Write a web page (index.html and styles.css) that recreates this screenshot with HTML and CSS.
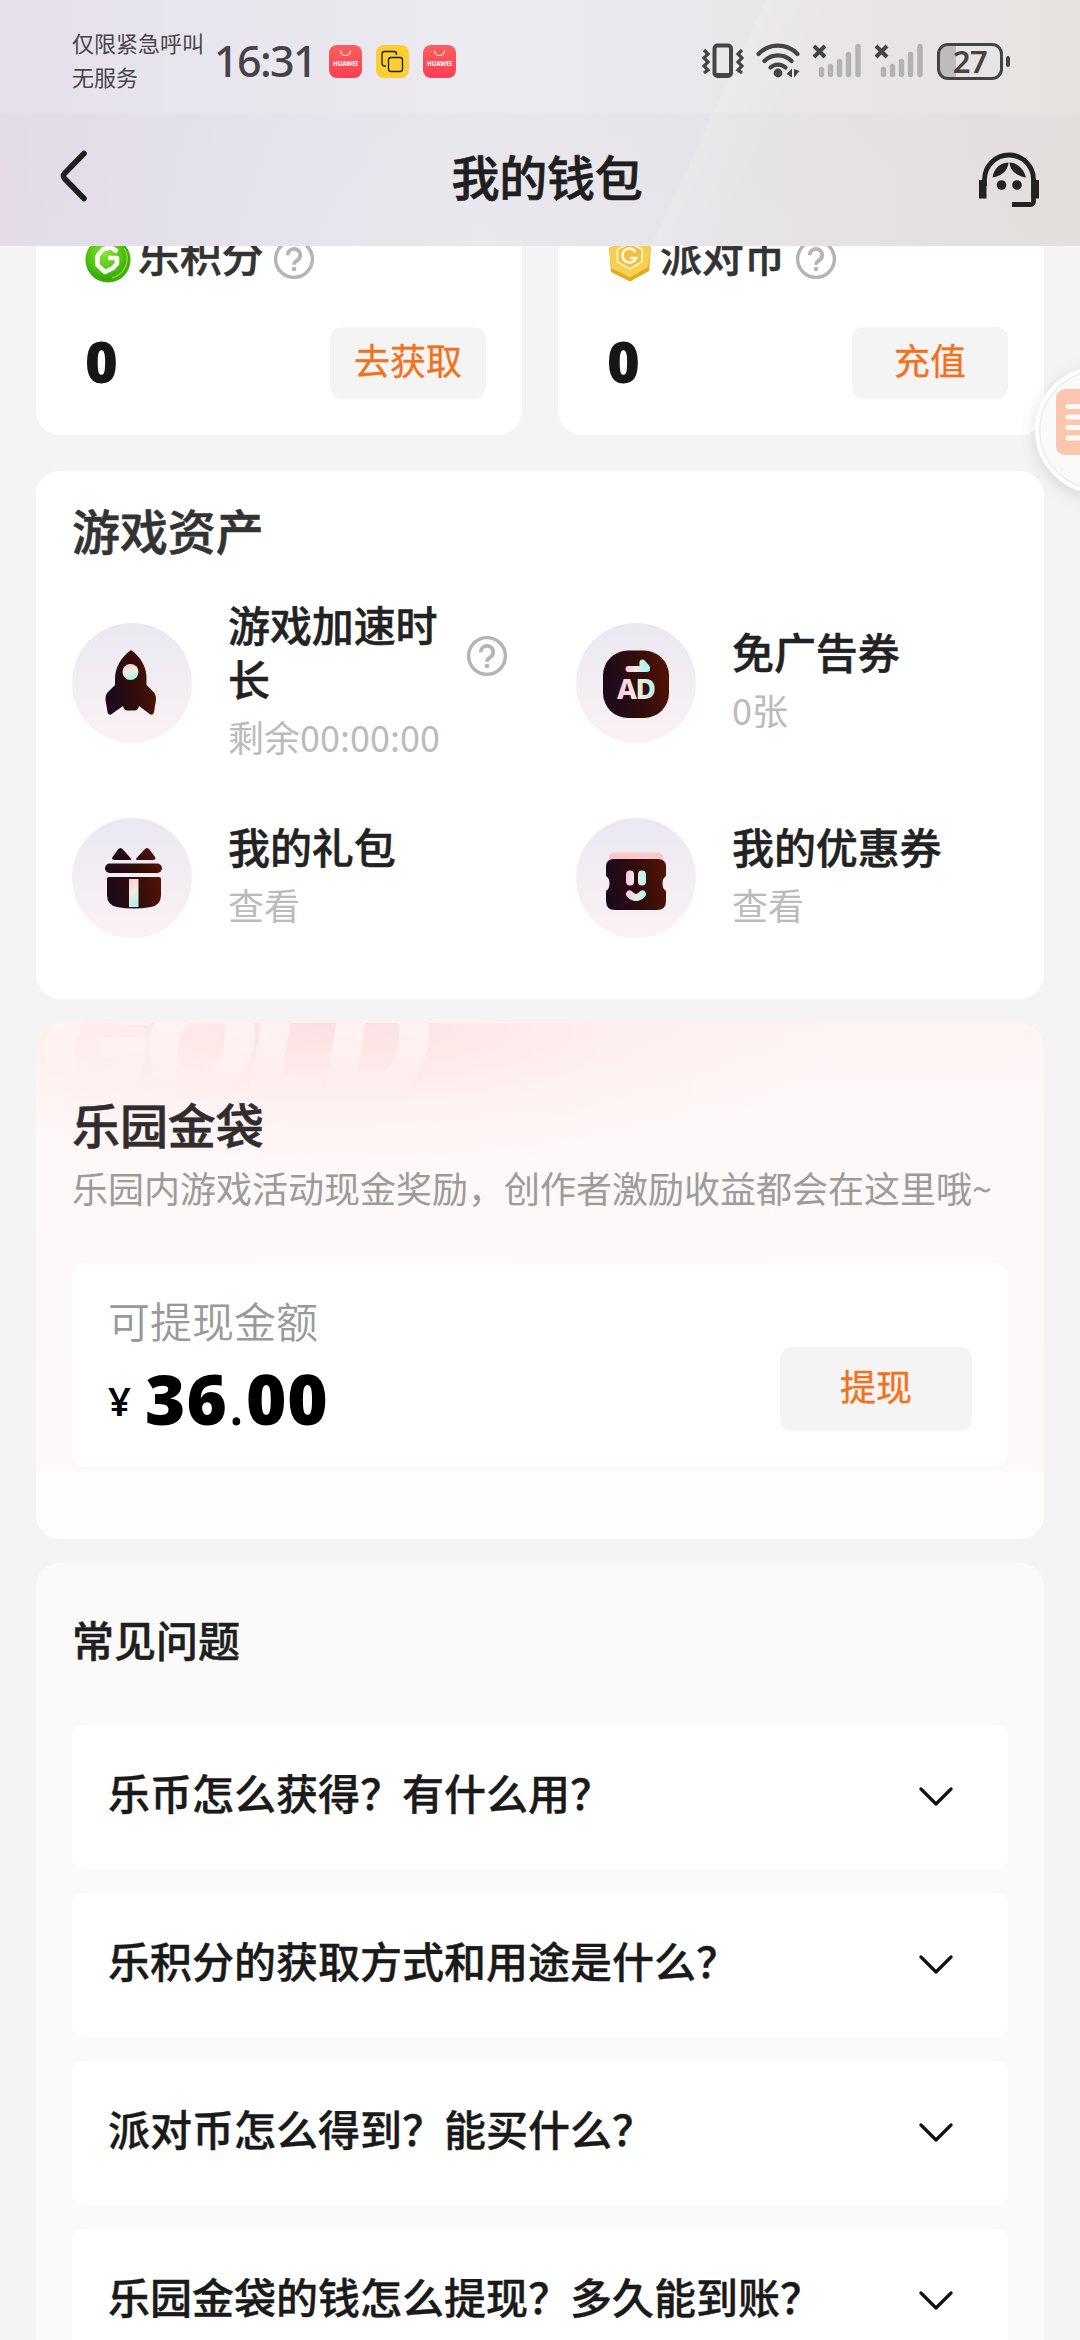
FILE: index.html
```html
<!DOCTYPE html>
<html lang="zh-CN">
<head>
<meta charset="utf-8">
<title>我的钱包</title>
<link rel="stylesheet" href="styles.css">
</head>
<body>
<svg class="defs" aria-hidden="true">
  <defs>
    <linearGradient id="dark" x1="0" y1="0.4" x2="1" y2="0.2"><stop offset="0" stop-color="#1c0a1c"/><stop offset="0.5" stop-color="#300c0c"/><stop offset="1" stop-color="#541405"/></linearGradient>
    <linearGradient id="holoV" x1="0" y1="0" x2="0.3" y2="1"><stop offset="0" stop-color="#fcc4e2"/><stop offset="0.5" stop-color="#f6ead8"/><stop offset="1" stop-color="#b4f2ee"/></linearGradient>
    <linearGradient id="holoH" x1="0" y1="0" x2="1" y2="0"><stop offset="0" stop-color="#fdc6e6"/><stop offset="0.5" stop-color="#f6ead8"/><stop offset="1" stop-color="#aef2f2"/></linearGradient>
    <linearGradient id="smile" gradientUnits="userSpaceOnUse" x1="50" y1="0" x2="70" y2="0"><stop offset="0" stop-color="#fdc6e6"/><stop offset="0.5" stop-color="#f0ecdf"/><stop offset="1" stop-color="#aef2f2"/></linearGradient>
    <radialGradient id="green" cx="0.45" cy="0.35" r="0.7"><stop offset="0" stop-color="#8be33a"/><stop offset="0.6" stop-color="#4fc40f"/><stop offset="1" stop-color="#2f9a08"/></radialGradient>
    <linearGradient id="red" x1="0" y1="0" x2="0" y2="1"><stop offset="0" stop-color="#fc5f5d"/><stop offset="1" stop-color="#fb3e54"/></linearGradient>
    <symbol id="help" viewBox="0 0 42 42"><circle cx="21" cy="21" r="18.400" fill="none" stroke="#b4b4b4" stroke-width="3.400"/><path d="M14.800 17.200a6.200 6.200 0 1 1 9.400 5.200c-2 1.200-3.200 2-3.200 4.400" fill="none" stroke="#b4b4b4" stroke-width="3.600"/><circle cx="21" cy="31" r="2.300" fill="#b4b4b4"/></symbol>
    <symbol id="down" viewBox="0 0 34 20"><path d="M2 2 17 17 32 2" fill="none" stroke="#111" stroke-width="3.200" stroke-linecap="round" stroke-linejoin="round"/></symbol>
    <symbol id="signal" viewBox="0 0 52 36"><path d="M2 3 13 14M13 3 2 14" stroke="#444" stroke-width="4" stroke-linecap="butt"/><g stroke="#b3b1b2" stroke-width="5.400" stroke-linecap="round"><path d="M9.500 26.500v5M18.500 23.500v8M27.500 18.500v13M36.500 11.500v20M46 3.500v28"/></g></symbol>
    <symbol id="huawei" viewBox="0 0 33 33"><rect width="33" height="33" rx="8" fill="url(#red)"/><path d="M11.500 5.500a5 5 0 0 0 10 0" fill="none" stroke="#ffd9d9" stroke-width="1.100"/><text x="16.500" y="21.300" text-anchor="middle" textLength="25" lengthAdjust="spacingAndGlyphs" class="huawei-word">HUAWEI</text></symbol>
  </defs>
</svg>

<div class="page">
  <header class="top">
    <div class="status">
      <div class="carrier">仅限紧急呼叫<br>无服务</div>
      <div class="clock">16:31</div>
      <div class="apps">
        <svg width="33" height="33"><use href="#huawei"/></svg>
        <svg width="33" height="33" viewBox="0 0 33 33"><rect width="33" height="33" rx="8" fill="#fbcf2f"/><path d="M20.500 10V9a2.500 2.500 0 0 0-2.500-2.500H8.500A2.500 2.500 0 0 0 6 9v9.500A2.500 2.500 0 0 0 8.500 21H10" fill="none" stroke="#1d1a10" stroke-width="1.300"/><rect x="12.500" y="12.500" width="14" height="14" rx="2.500" fill="none" stroke="#1d1a10" stroke-width="1.300"/></svg>
        <svg width="33" height="33"><use href="#huawei"/></svg>
      </div>
      <div class="indicators">
        <svg width="42" height="36" viewBox="0 0 42 36"><rect x="12.500" y="2.500" width="16.500" height="30.500" rx="3" fill="none" stroke="#444" stroke-width="4"/><path d="M13 31.500h16" stroke="#444" stroke-width="3"/><path d="M2 7l4 4-4 4 4 4-4 4 4 4-4 3M40 7l-4 4 4 4-4 4 4 4-4 4 4 3" fill="none" stroke="#444" stroke-width="3.200"/></svg>
        <svg width="44" height="36" viewBox="0 0 44 36"><g fill="none" stroke="#444" stroke-width="4.200" stroke-linecap="round"><path d="M2.500 11a27 27 0 0 1 39 0"/><path d="M8.500 18a19 19 0 0 1 27 0"/><path d="M14.500 24.500a11 11 0 0 1 15 0" /></g><circle cx="22" cy="30" r="4.400" fill="#444"/><path d="M30.500 31 36 25.500V34.500M38 26v8.500L43.500 28z" fill="#444"/></svg>
        <svg width="52" height="36"><use href="#signal"/></svg>
        <svg width="52" height="36"><use href="#signal"/></svg>
        <div class="battery"><span>27</span></div>
      </div>
    </div>
    <div class="nav">
      <svg class="back" width="30" height="52" viewBox="0 0 30 52"><path d="M26 3.500 6.500 23.500a3.600 3.600 0 0 0 0 5L26 48.500" fill="none" stroke="#1f1f21" stroke-width="5.600" stroke-linecap="round"/></svg>
      <h1>我的钱包</h1>
      <svg class="service" width="62" height="56" viewBox="0 0 62 56"><path d="M6.500 34v-6.500a24.500 24.500 0 0 1 49 0v22a3 3 0 0 1-3 3H34" fill="none" stroke="#222" stroke-width="4.800"/><path d="M1 28h7.500v18.500H1zM53.500 28H61v18.500h-7.500z" fill="#222"/><path d="M14.500 25.500C16 17 21 11 30.500 10.500 30 18 24.500 24 14.500 25.500zM31.500 10.500C40 11 46 17 48 25.500 38 24 32 18 31.500 10.500z" fill="#222"/><circle cx="23.500" cy="33" r="4.800" fill="#222"/><circle cx="39" cy="33" r="4.800" fill="#222"/></svg>
    </div>
  </header>

  <main class="scroll">
    <section class="coins">
      <div class="coin-card">
        <div class="coin-name">
          <svg width="48" height="48" viewBox="0 0 48 48"><circle cx="24" cy="24" r="22.500" fill="#3fae0b"/><circle cx="23" cy="23" r="21" fill="url(#green)"/><path d="M40 12a20 20 0 0 1-12 30" fill="none" stroke="#8fdc3c" stroke-width="1.400"/><path d="M33.500 15.500 27 11.500 19.500 13 13.500 20v9l7.500 7 8-4 4-4.500v-5.500h-9" fill="none" stroke="#fbfff2" stroke-width="4.600" stroke-linejoin="round"/></svg>
          <span>乐积分</span>
          <svg class="help" width="42" height="42"><use href="#help"/></svg>
        </div>
        <div class="coin-row"><b>0</b><div class="pill">去获取</div></div>
      </div>
      <div class="coin-card">
        <div class="coin-name">
          <svg width="48" height="48" viewBox="0 0 48 48"><path d="M24 2 45 11 43 35 24 45.500 5 36 3 12z" fill="#e2aa20"/><path d="M24 1 45 11 42 31 24 41.500 5 32 3 12z" fill="#f9cf51"/><path d="M24 7 36 13.500v12L24 33l-12.500-7V13.500z" fill="#f0bf46" stroke="#fff3c6" stroke-width="1.800"/><path d="M29.500 16a7 7 0 1 0 .5 6h-6" fill="none" stroke="#fff8da" stroke-width="2.600"/></svg>
          <span>派对币</span>
          <svg class="help" width="42" height="42"><use href="#help"/></svg>
        </div>
        <div class="coin-row"><b>0</b><div class="pill">充值</div></div>
      </div>
    </section>

    <section class="assets">
      <h2>游戏资产</h2>
      <div class="asset-grid">
        <div class="asset">
          <svg width="120" height="120" viewBox="0 0 120 120"><path d="M59 27C49 34 43 45 43 56v6l-8 8q-2 3-1.500 7l2 12c.6 3 3.500 3.500 5.300 1.300L51 83q1 4.500 4.500 4.500h7q3.500 0 4.500-4.500l9.700 7.300c2 2.200 4.700 1.700 5.300-1.300l2-12q.5-4-1.500-7l-8-8v-6C75 45 69 34 59 27z" fill="url(#dark)"/><circle cx="58.500" cy="49" r="8" fill="url(#holoV)"/></svg>
          <div class="asset-text"><strong>游戏加速时长</strong><small>剩余00:00:00</small></div>
          <svg class="help" width="42" height="42"><use href="#help"/></svg>
        </div>
        <div class="asset">
          <svg width="120" height="120" viewBox="0 0 120 120"><rect x="27" y="27.500" width="66" height="67.500" rx="25" fill="url(#dark)"/><path d="M52.500 46h18.500M66.500 39.500l4.500 5v1.500h-4.500z" fill="none" stroke="url(#smile)" stroke-width="6" stroke-linejoin="round" stroke-linecap="round"/><text x="60.500" y="76" text-anchor="middle" textLength="39" class="ad-word">AD</text></svg>
          <div class="asset-text"><strong>免广告券</strong><small>0张</small></div>
        </div>
        <div class="asset">
          <svg width="120" height="120" viewBox="0 0 120 120"><g fill="url(#dark)"><path d="M40.500 39 46 31.500q2.500-3 5 0l7.500 8.500q1.500 2-1 2H43q-4 0-2.500-3zM64.500 40l8-8.500q2.500-3 5 0L83 39q1.500 3-2.500 3H66q-3 0-1.500-2z"/><rect x="33" y="45.500" width="57" height="9.500" rx="4.700"/><path d="M35 61q0-2 2-2h50q2 0 2 2v16q0 10-10 12-18 3-34 0-10-2-10-12z"/></g><rect x="57" y="61" width="9.500" height="28" fill="url(#holoV)"/></svg>
          <div class="asset-text"><strong>我的礼包</strong><small>查看</small></div>
        </div>
        <div class="asset">
          <svg width="120" height="120" viewBox="0 0 120 120"><rect x="33" y="34.500" width="54" height="14" rx="5" fill="#fbc6ca"/><path d="M38 41h44q8 0 8 8v9q-3.500 2-3.500 7.500T90 73v10q0 9-9 9H39q-9 0-9-9V73q3.500-2 3.500-7.500T30 58V49q0-8 8-8z" fill="url(#dark)"/><path d="M54 56.500v7M66 56.500v7" stroke="url(#smile)" stroke-width="8" stroke-linecap="round"/><path d="M53.500 76q6.500 7 13 0" fill="none" stroke="url(#smile)" stroke-width="7" stroke-linecap="round"/></svg>
          <div class="asset-text"><strong>我的优惠券</strong><small>查看</small></div>
        </div>
      </div>
    </section>

    <section class="gold">
      <div class="gold-word" aria-hidden="true">GOLD</div>
      <h2>乐园金袋</h2>
      <p>乐园内游戏活动现金奖励，创作者激励收益都会在这里哦~</p>
      <div class="balance">
        <div>
          <div class="balance-label">可提现金额</div>
          <div class="amount"><i>¥</i>36<em>.</em>00</div>
        </div>
        <div class="pill withdraw">提现</div>
      </div>
    </section>

    <section class="faq">
      <h3>常见问题</h3>
      <div class="faq-list">
        <div class="faq-item"><span>乐币怎么获得？有什么用？</span><svg width="34" height="20"><use href="#down"/></svg></div>
        <div class="faq-item"><span>乐积分的获取方式和用途是什么？</span><svg width="34" height="20"><use href="#down"/></svg></div>
        <div class="faq-item"><span>派对币怎么得到？能买什么？</span><svg width="34" height="20"><use href="#down"/></svg></div>
        <div class="faq-item"><span>乐园金袋的钱怎么提现？多久能到账？</span><svg width="34" height="20"><use href="#down"/></svg></div>
      </div>
    </section>
  </main>

  <div class="floater"><svg width="66" height="66" viewBox="0 0 66 66"><rect width="66" height="66" rx="9" fill="#fac6ad"/><path d="M12 17.500h42M12 28h42M12 38.500h42M12 49h42" stroke="#fffaf7" stroke-width="5" stroke-linecap="round"/></svg></div>
</div>
</body>
</html>
```
FILE: styles.css
```css
* { box-sizing: border-box; margin: 0; padding: 0; }

body {
  font-family: "Noto Sans CJK SC", "Noto Sans", sans-serif;
  background: #f4f4f4;
  color: #1f1f1f;
}

svg { display: block; flex: none; }
.defs { position: absolute; width: 0; height: 0; }

.page {
  position: relative;
  width: 1080px;
  height: 2340px;
  overflow: hidden;
  display: flex;
  flex-direction: column;
}

/* header */
.top {
  flex: none;
  height: 246px;
  background:
    linear-gradient(115deg, transparent 64%, rgba(255,255,255,.12) 64.2%, transparent 70%),
    linear-gradient(to bottom, rgba(255,255,255,.12) 113px, rgba(220,215,225,.08) 115px, transparent),
    linear-gradient(to right, #e5dbe9 0, #e4e1eb 180px, #e9e8ee 480px, #e7e5e9 700px, #e6e1e2 880px, #e4dfdc 1080px);
}

.status {
  height: 114px;
  padding: 0 71px 0 72px;
  display: flex;
  align-items: center;
}
.carrier { width: 142px; margin-top: 4px; font-size: 22px; line-height: 34px; color: #48464c; white-space: nowrap; }
.clock { width: 115px; margin-top: 8px; font: 500 43px/54px "Noto Sans", sans-serif; letter-spacing: -1.6px; color: #454349; }
.apps { display: flex; gap: 14px; margin-top: 9px; }
.indicators { display: flex; margin-left: auto; margin-top: 8px; align-items: center; }
.indicators svg:nth-child(2) { margin-left: 12px; }
.indicators svg:nth-child(3) { margin-left: 12px; }
.indicators svg:nth-child(4) { margin-left: 10px; }

.battery {
  position: relative;
  width: 66px;
  height: 37px;
  margin: 0 6px 0 11px;
  border: 3px solid #444;
  border-radius: 11px;
  background: linear-gradient(to right, #bdbbbc 16px, transparent 16px);
  display: flex;
  justify-content: center;
  align-items: center;
  font: 600 31px/31px "Noto Sans", sans-serif;
  letter-spacing: -.5px;
  color: #444;
}
.battery::after { content: ""; position: absolute; right: -10px; top: 10px; width: 4px; height: 11px; border-radius: 2px; background: #444; }

.nav { height: 132px; padding: 0 40px 0 58px; display: flex; align-items: center; justify-content: space-between; }
.nav h1 { font-size: 48px; line-height: 60px; font-weight: 500; margin: -10px 0 0 28px; letter-spacing: -.3px; -webkit-text-stroke: .7px; }
.back { margin-top: -8px; }

/* content */
.scroll { flex: 1; overflow: hidden; padding: 0 36px; }
h2 { font-size: 48px; line-height: 60px; font-weight: 500; letter-spacing: -.1px; color: #333; -webkit-text-stroke: .6px; }

.coins { display: flex; gap: 36px; margin-top: -60px; }
.coin-card { flex: 1; height: 249px; padding: 48px 36px 36px 48px; background: #fff; border-radius: 24px; }
.coin-name { display: flex; align-items: center; height: 52px; font-size: 42px; font-weight: 500; line-height: 52px; color: #333; }
.coin-name span { margin: -12px 10px 0 6px; letter-spacing: -.2px; -webkit-text-stroke: .5px; }
.coin-name .help { margin-top: -2px; }
.coin-row { display: flex; justify-content: space-between; align-items: center; height: 72px; margin-top: 41px; padding-left: 1px; }
.coin-row b { font: 900 56px/68px "Noto Sans", sans-serif; padding-bottom: 4px; color: #161616; }

.pill {
  width: 156px;
  height: 72px;
  padding-bottom: 8px;
  border-radius: 12px;
  background: #f4f4f4;
  color: #f2711c;
  font-size: 36px;
  display: flex;
  align-items: center;
  justify-content: center;
  -webkit-text-stroke: .3px;
}

.assets { height: 528px; margin-top: 36px; padding: 28px 36px; background: #fff; border-radius: 24px; }
.asset-grid { display: grid; grid-template-columns: 504px 432px; row-gap: 49px; margin-top: 38px; }
.asset { display: flex; align-items: center; }
.asset > svg:first-child { border-radius: 50%; background: linear-gradient(#ebe8f2, #f2edf3 45%, #fbf2f3); }
.asset-text { width: 240px; padding: 0 26px 8px 0; margin-left: 36px; }
.asset-text strong { display: block; font-size: 42px; line-height: 54px; font-weight: 500; letter-spacing: -.1px; color: #222; -webkit-text-stroke: .5px; }
.asset-text small { display: block; margin-top: 7px; margin-bottom: 1px; font-size: 36px; line-height: 48px; font-weight: 400; color: #bbb; white-space: nowrap; }
.asset .help { margin: -54px 0 0 -2px; }
.ad-word { font: 800 28px "Noto Sans", sans-serif; fill: url(#holoH); }
.huawei-word { font: 700 6.5px "Noto Sans", sans-serif; fill: #fff; }

.asset:nth-child(even) .asset-text { padding-right: 0; }

.gold {
  position: relative;
  height: 516px;
  margin-top: 24px;
  padding: 70px 36px 0;
  border-radius: 24px;
  overflow: hidden;
  background:
    radial-gradient(ellipse 520px 150px at 300px 0, rgba(253,218,219,.75), rgba(255,232,232,.4) 55%, transparent),
    linear-gradient(#fef4f4 0, #fef8f8 100px, #fef9f9 446px, #fefdfb 449px);
}
.gold-word {
  position: absolute;
  left: 2px;
  top: -44px;
  padding-right: 20px;
  font: italic 900 149px/130px Inter, sans-serif;
  letter-spacing: -9px;
  background: linear-gradient(rgba(255,245,243,.9) 40px, rgba(255,241,240,.8) 95px, rgba(255,240,240,.1) 122px);
  background-clip: text;
  -webkit-background-clip: text;
  color: transparent;
}
.gold h2, .gold p { position: relative; }
.gold h2 { color: #332c2d; }
.gold p { margin-top: 10px; font-size: 36px; line-height: 48px; font-weight: 400; color: #9f9a9a; white-space: nowrap; }
.balance {
  position: relative;
  display: flex;
  justify-content: space-between;
  align-items: flex-end;
  height: 204px;
  margin-top: 52px;
  padding: 30px 36px 36px;
  border-radius: 14px;
  background: #fff;
}
.balance > div:first-child { align-self: flex-start; }
.balance-label { font-size: 42px; line-height: 54px; font-weight: 350; color: #999; }
.amount { display: flex; align-items: baseline; height: 100px; font: 900 69px/100px "Noto Sans", sans-serif; color: #000; letter-spacing: 1px; margin-top: 1px; }
.amount i { font: 600 40px "Noto Sans", sans-serif; width: 37px; position: relative; top: -9px; }
.amount em { font: 500 56px "Noto Sans", sans-serif; width: 18px; text-align: center; }
.withdraw { width: 192px; height: 84px; }

.faq { height: 900px; margin-top: 24px; padding: 49px 36px 0; border-radius: 24px; background: #fafafa; }
.faq h3 { font-size: 42px; line-height: 54px; font-weight: 500; -webkit-text-stroke: .5px; }
.faq-list { display: flex; flex-direction: column; gap: 24px; margin-top: 59px; }
.faq-item { height: 144px; padding: 0 55px 0 36px; display: flex; align-items: center; justify-content: space-between; border-radius: 12px; background: #fff; font-size: 42px; font-weight: 500; color: #1a1a1a; -webkit-text-stroke: .4px; }
.faq-item span { padding-bottom: 12px; }

.floater {
  position: absolute;
  left: 1035px;
  top: 366px;
  width: 128px;
  height: 128px;
  padding: 19px 0 0 17px;
  border: 4px solid #fff;
  border-radius: 50%;
  background: #fafafa;
  box-shadow: 0 4px 18px rgba(0,0,0,.12), inset 0 0 0 1.5px #ececec;
}
```
